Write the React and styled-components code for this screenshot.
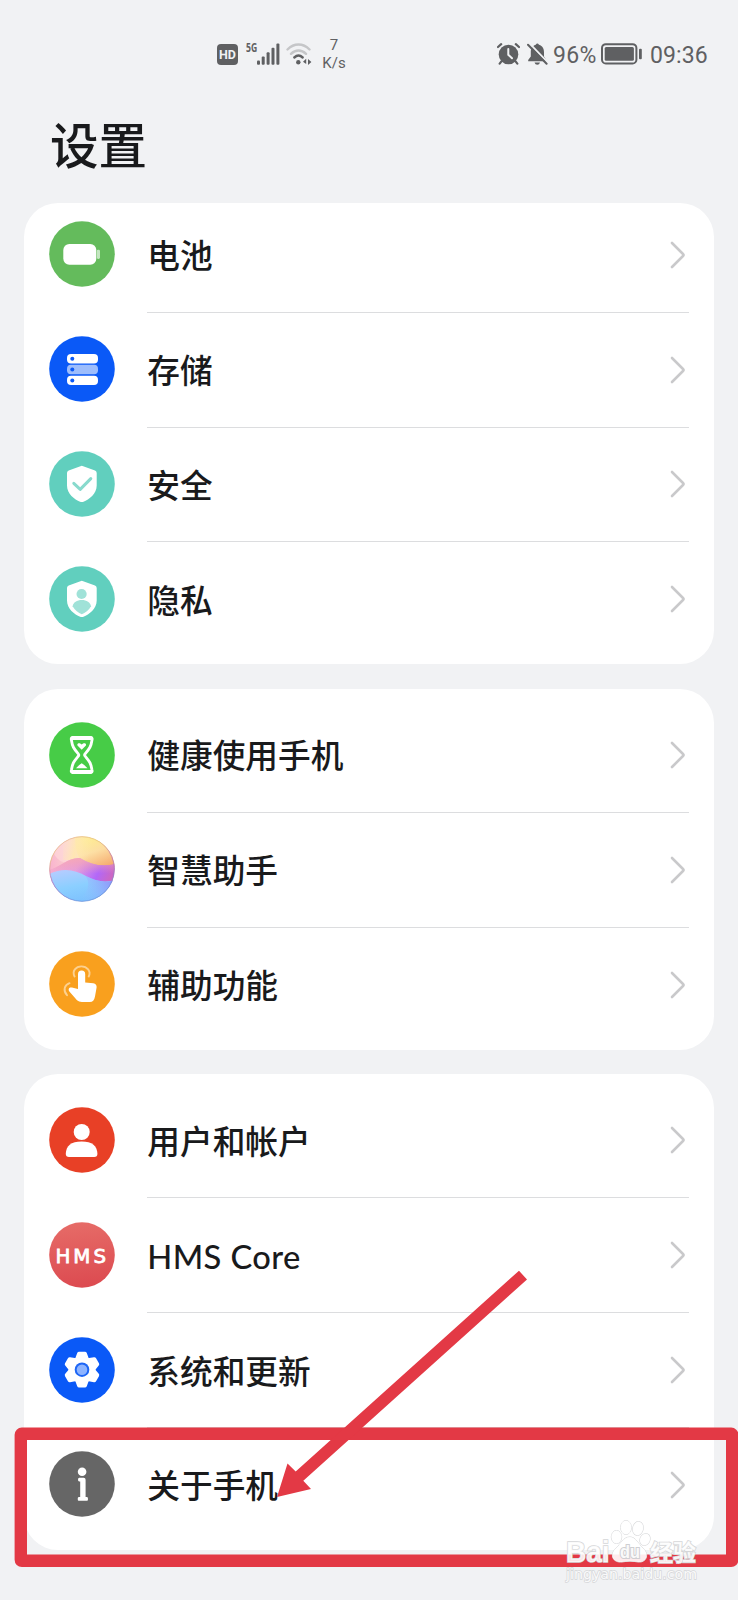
import React from 'react';
import styled, { createGlobalStyle } from 'styled-components';

const GlobalStyle = createGlobalStyle`
  body { margin: 0; background: #f1f2f4; }
  * { box-sizing: border-box; }
`;

const Screen = styled.div`
  position: relative;
  width: 738px;
  height: 1600px;
  overflow: hidden;
  background: #f1f2f4;
  color: #191a1c;
  font-family: Lato, 'Noto Sans CJK SC', sans-serif;
`;

const StatusBar = styled.header`
  display: flex;
  justify-content: space-between;
  height: 108px;
  padding: 38px 30px 0 217px;
  color: #5f6062;
  font-family: Roboto, sans-serif;
`;

const StatusGroup = styled.div`
  display: flex;
  align-items: center;
  height: 32px;
`;

const HdBadge = styled.span`
  width: 21px;
  height: 21px;
  border-radius: 4px;
  background: #5f6062;
  color: #f1f2f4;
  font: 700 12.5px/21px Roboto, sans-serif;
  text-align: center;
`;

const NetworkType = styled.span`
  align-self: flex-start;
  width: 11px;
  margin: 3.5px 0 0 7.5px;
  font: 700 12.5px/12px 'Open Sans', sans-serif;
  transform: scaleX(0.69);
  transform-origin: left;
`;

const StatusIcon = styled.svg`
  display: block;
  flex: none;
  margin-left: ${({ $gap = 0 }) => $gap}px;
`;

const Speed = styled.div`
  width: 24px;
  margin-left: 10px;
  font-size: 15px;
  line-height: 18px;
  text-align: center;
  white-space: nowrap;
`;

const StatusText = styled.span`
  width: ${({ $width }) => $width}px;
  margin-left: ${({ $gap }) => $gap}px;
  padding-top: 3px;
  font-size: 23px;
  line-height: 32px;
  letter-spacing: ${({ $tracking = 0 }) => $tracking}px;
  white-space: nowrap;
`;

const Title = styled.h1`
  height: 95px;
  margin: 0;
  padding-left: 50px;
  font-size: 48.5px;
  line-height: 75px;
  font-weight: 500;
`;

const Cards = styled.main`
  display: flex;
  flex-direction: column;
  gap: 24.6px;
  padding: 0 24.4px;
`;

const Card = styled.section`
  overflow: hidden;
  padding: ${({ $scrolled }) => ($scrolled ? '0 0 7px' : '9.2px 0 7.2px')};
  border-radius: 34px;
  background: #fff;

  & > :first-child { margin-top: ${({ $scrolled }) => ($scrolled ? '-5.1px' : '0')}; }
`;

const Row = styled.div`
  display: flex;
  align-items: center;
  height: 114.83px;
  padding-left: 24.4px;
`;

const RowIcon = styled.svg`
  display: block;
  flex: none;
  width: 66px;
  height: 66px;
  margin-bottom: 1.8px;
`;

const RowBody = styled.div`
  display: flex;
  align-items: center;
  justify-content: space-between;
  flex: 1;
  height: 100%;
  margin: 0 24.5px 0 32.5px;
  padding-right: 3px;
  border-bottom: 1px solid ${({ $last }) => ($last ? 'transparent' : '#dcdddf')};
`;

const Label = styled.span`
  padding-top: 3px;
  font-size: 32.7px;
  line-height: 44px;
  font-weight: 500;
  letter-spacing: ${({ $latin }) => ($latin ? '0.4px' : '0')};
`;

const Annotation = styled.svg`
  position: absolute;
  inset: 0;
  pointer-events: none;
`;

const Watermark = styled.svg`
  position: absolute;
  left: 558px;
  top: 1512px;
`;

const Chevron = () => (
  <svg width="16" height="28" viewBox="0 0 16 28" fill="none">
    <path d="M2 2 13 13 Q14 14 13 15 L2 26" stroke="#c9c9cb" strokeWidth="2.6" strokeLinecap="round" strokeLinejoin="round" />
  </svg>
);

const Disc = ({ color }) => <circle cx="33" cy="33" r="32.8" fill={color} />;
const SHIELD = 'M32.8 14.7 46 19.4Q47.7 20 47.7 22V34.5C47.7 43 40 48.5 34.5 50.7Q32.8 51.4 31.1 50.7C25.6 48.5 18 43 18 34.5V22Q18 20 19.7 19.4Z';

const icons = {
  battery: (
    <>
      <Disc color="#64bb5c" />
      <rect x="14.3" y="23" width="33" height="20.7" rx="6" fill="#fff" />
      <rect x="47.8" y="28.7" width="3.2" height="9.3" rx="1.4" fill="#c3e5c0" />
    </>
  ),
  storage: (
    <>
      <Disc color="#0a59f7" />
      {[18, 28.8, 39.7].map((y, i) => (
        <React.Fragment key={y}>
          <rect x="18" y={y} width="31" height="9.4" rx="4" fill={i === 1 ? '#9dbdfc' : '#fff'} />
          <circle cx="23.3" cy={y + 4.7} r="2" fill="#0a59f7" />
        </React.Fragment>
      ))}
    </>
  ),
  security: (
    <>
      <Disc color="#61cfbe" />
      <path d={SHIELD} fill="#fff" />
      <path d="M24.8 32.4 31.2 38.4 41.8 27.6" fill="none" stroke="#88dacd" strokeWidth="3" strokeLinecap="round" strokeLinejoin="round" />
    </>
  ),
  privacy: (
    <>
      <Disc color="#61cfbe" />
      <path d={SHIELD} fill="#fff" />
      <circle cx="32.6" cy="28" r="5.1" fill="#a0e2d8" />
      <path d="M23.6 40.2C24.2 36.5 28 34 32.8 34S41.4 36.5 42 40.2C40 44 36 47 32.8 48.2 29.5 47 25.8 44 23.6 40.2Z" fill="#a0e2d8" />
    </>
  ),
  hourglass: (
    <>
      <Disc color="#47cc47" />
      <path d="M23.5 15.5H41.9Q43.6 15.7 43 18C42 25 40.5 26.5 36 32Q35.2 33 36 34C40.5 39.5 42 41 43 48Q43.6 50.3 41.9 50.5H23.5Q21.8 50.3 22.4 48C23.4 41 24.9 39.5 29.4 34Q30.2 33 29.4 32C24.9 26.5 23.4 25 22.4 18Q21.8 15.7 23.5 15.5Z" fill="none" stroke="#fff" strokeWidth="2.8" strokeLinejoin="round" />
      <path d="M23.3 49.8H42.2M23.3 16.2H42.2" stroke="#fff" strokeWidth="3.6" strokeLinecap="round" />
      <path d="M32.7 27.8 28.7 23.8C27.3 22 29.8 19.8 32.7 22.4 35.6 19.8 38.1 22 36.7 23.8ZM27 46.2Q29.5 43 32.7 41.2 36 43 38.5 46.2Z" fill="#fff" />
    </>
  ),
  assistant: (
    <>
      <defs>
        <clipPath id="orb"><circle cx="33" cy="33" r="32.6" /></clipPath>
        <linearGradient id="sky" x1="0" y1="0.4" x2="1" y2="0.2">
          <stop stopColor="#f9b3cf" /><stop offset="0.35" stopColor="#fbd5ce" /><stop offset="0.6" stopColor="#fce5ae" /><stop offset="1" stopColor="#f5b47e" />
        </linearGradient>
        <linearGradient id="hill" x1="0" y1="0.4" x2="1" y2="0.6">
          <stop stopColor="#f6b0d2" /><stop offset="0.4" stopColor="#e5a0e0" /><stop offset="0.75" stopColor="#b268f8" /><stop offset="1" stopColor="#cf67bd" />
        </linearGradient>
        <linearGradient id="blush" x1="0" y1="0" x2="0" y2="1">
          <stop stopColor="#f9a9ae" stopOpacity="0.8" /><stop offset="0.6" stopColor="#f599ab" stopOpacity="0" />
        </linearGradient>
        <linearGradient id="sea" x1="0.2" y1="0" x2="0.6" y2="1">
          <stop stopColor="#b5ccff" /><stop offset="0.5" stopColor="#8bcfff" /><stop offset="1" stopColor="#7cc0fd" />
        </linearGradient>
        <linearGradient id="wave" x1="0" y1="0.6" x2="1" y2="0.2">
          <stop stopColor="#9cc5ff" stopOpacity="0" /><stop offset="1" stopColor="#937bf8" />
        </linearGradient>
        <linearGradient id="sun" x1="0.4" y1="0" x2="0.8" y2="1">
          <stop stopColor="#fff08d" /><stop offset="0.45" stopColor="#fde0a4" /><stop offset="1" stopColor="#f4a264" />
        </linearGradient>
        <linearGradient id="haze" x1="0" y1="0" x2="1" y2="0.2">
          <stop stopColor="#ffe3c4" stopOpacity="0" /><stop offset="0.5" stopColor="#ffe8b0" stopOpacity="0.9" /><stop offset="1" stopColor="#ffe8b0" stopOpacity="0" />
        </linearGradient>
        <linearGradient id="rim" x1="0" y1="0" x2="0.4" y2="1">
          <stop stopColor="#e6a7a8" /><stop offset="0.3" stopColor="#e4c374" /><stop offset="0.6" stopColor="#bb6cba" /><stop offset="1" stopColor="#6690df" />
        </linearGradient>
      </defs>
      <g clipPath="url(#orb)">
        <rect width="66" height="66" fill="url(#sky)" />
        <circle cx="19" cy="12" r="15" fill="#ffdcdc" opacity="0.6" />
        <path d="M26 0H66V31C50 34 32 29 28 17Q26 8 26 0Z" fill="url(#sun)" opacity="0.85" />
        <rect x="14" y="0" width="30" height="24" fill="url(#haze)" />
        <path d="M0 34C11 31 20 21 31 22 42 29 54 31 66 28V48H0Z" fill="url(#hill)" />
        <path d="M0 34C11 31 20 21 31 22 42 29 54 31 66 28V48H0Z" fill="url(#blush)" />
        <path d="M0 38C15 31 26 34 37 40 47 45 55 47 66 44V66H0Z" fill="url(#sea)" />
        <path d="M28 66C40 57 42 46 36 39.5 49 46 56 47 66 44V66Z" fill="url(#wave)" opacity="0.8" />
      </g>
      <circle cx="33" cy="33" r="32.3" fill="none" stroke="url(#rim)" strokeWidth="0.9" opacity="0.8" />
    </>
  ),
  accessibility: (
    <>
      <Disc color="#f9a01e" />
      <path d="M29 38V23.2Q29 19.6 32.6 19.6T36.2 23.2V31.4L44.3 32.2Q48 32.8 47.6 36.6L46 45.5Q45 51 40.8 51H32.8Q30 51 28 49.2L20.6 40.8C18.5 38 20.4 35.7 23 36.6Z" fill="#fff" />
      <path d="M25.6 25.5C22.7 20 27 15.4 32.4 15.4S42.5 20 39.7 25.5M20.5 32.2C15.3 34 13.8 39.5 18 44.2" fill="none" stroke="#fcd08f" strokeWidth="1.9" strokeLinecap="round" />
    </>
  ),
  user: (
    <>
      <Disc color="#e84026" />
      <circle cx="32.7" cy="25" r="8" fill="#fff" />
      <path d="M16.8 46.8C16.8 39 22 34.4 32.6 34.4S48.4 39 48.4 46.8Q48.4 50 45.2 50H20Q16.8 50 16.8 46.8Z" fill="#fff" />
    </>
  ),
  hms: (
    <>
      <defs>
        <linearGradient id="hms" x1="0.5" y1="0" x2="0.6" y2="1">
          <stop stopColor="#e66b67" /><stop offset="1" stopColor="#dc4a50" />
        </linearGradient>
      </defs>
      <Disc color="url(#hms)" />
      <text x="6.5" y="40.5" textLength="50.5" fontFamily="'DejaVu Sans', sans-serif" fontSize="19.8" fill="#fff" stroke="#fff" strokeWidth="0.8">HMS</text>
    </>
  ),
  update: (
    <>
      <Disc color="#0a59f7" />
      <g fill="#fff" stroke="#fff" strokeWidth="4" strokeLinejoin="round">
        <circle cx="33" cy="32.7" r="11.3" />
        {[0, 60, 120, 180, 240, 300].map((a) => (
          <path key={a} d="M27.8 23 30.1 16.8H35.9L38.2 23Z" transform={`rotate(${a} 33 32.7)`} />
        ))}
      </g>
      <circle cx="33" cy="32.7" r="7.3" fill="#1e66f5" />
      <circle cx="33" cy="32.7" r="5.3" fill="#8eb4ff" />
    </>
  ),
  about: (
    <>
      <Disc color="#666" />
      <circle cx="33.1" cy="20.8" r="4.3" fill="#fff" />
      <path d="M30.2 26.8H34.6Q36.6 26.8 36.6 28.8V46H38Q39 46 39 47.9T38 49.8H29.8Q28.7 49.8 28.7 47.9T29.8 46H31.2V30.5H30.2Q29 30.5 29 28.7T30.2 26.8Z" fill="#fff" />
    </>
  ),
};

const groups = [
  [['battery', '电池'], ['storage', '存储'], ['security', '安全'], ['privacy', '隐私']],
  [['hourglass', '健康使用手机'], ['assistant', '智慧助手'], ['accessibility', '辅助功能']],
  [['user', '用户和帐户'], ['hms', 'HMS Core'], ['update', '系统和更新'], ['about', '关于手机']],
];

const Status = () => (
  <StatusBar>
    <StatusGroup>
      <HdBadge>HD</HdBadge>
      <NetworkType>5G</NetworkType>
      <StatusIcon width="23" height="22" viewBox="0 0 23 22" $gap={0.5} fill="#5f6062">
        <rect x="0" y="17.5" width="3" height="4.2" rx="1" />
        <rect x="4.7" y="13.5" width="3" height="8.2" rx="1" />
        <rect x="9.6" y="9.2" width="3" height="12.5" rx="1" />
        <rect x="14.5" y="4.8" width="3" height="16.9" rx="1" />
        <rect x="19.4" y="0.5" width="3" height="21.2" rx="1" />
      </StatusIcon>
      <StatusIcon width="26" height="22" viewBox="0 0 26 22" $gap={6} fill="none" strokeWidth="2.4" strokeLinecap="round">
        <path d="M1.5 6.5C8-.2 17-.2 23.5 6.5M5 10.8C9.5 6.3 15.5 6.3 20 10.8" stroke="#c5c6c8" />
        <path d="M8.3 14.5C11 12 14 12 16.7 14.5" stroke="#5f6062" />
        <circle cx="12.3" cy="19.3" r="2.2" fill="#5f6062" />
        <path d="M17 18.8 20.2 15.8V21ZM22 16 25.4 19 22 22Z" fill="#5f6062" />
      </StatusIcon>
      <Speed>7<br />K/s</Speed>
    </StatusGroup>
    <StatusGroup>
      <StatusIcon width="23" height="22" viewBox="0 0 23 22" fill="none" strokeLinecap="round">
        <circle cx="11.5" cy="11.5" r="9.8" fill="#5f6062" />
        <path d="M1 4 4.2 1.2M18.8 1.2 22 4M4.4 18.4 2.7 20.6M18.6 18.4 20.3 20.6" stroke="#5f6062" strokeWidth="2.2" />
        <path d="M11.3 6V11.7L15 15.2" stroke="#f1f2f4" strokeWidth="2" />
      </StatusIcon>
      <StatusIcon width="21" height="22" viewBox="0 0 21 22" $gap={7}>
        <path d="M8.7 1.8Q10.3-.6 12 1.8C15.8 3 17 6 17 9.3V13.5L19.2 17V18.2H1.2V17L3.8 13.5V9.3C3.8 6 5 3 8.7 1.8ZM7.5 19.5H13Q12.4 21.8 10.3 21.8T7.5 19.5Z" fill="#5f6062" />
        <path d="M2.4.4 21 19.6" stroke="#f1f2f4" strokeWidth="2" />
        <path d="M1 1.8 19.6 20.8" stroke="#5f6062" strokeWidth="2" strokeLinecap="round" />
      </StatusIcon>
      <StatusText $width={45} $gap={5} $tracking={0.3}>96%</StatusText>
      <StatusIcon width="41" height="22" viewBox="0 0 41 22" $gap={3} fill="none">
        <rect x="1" y="1.2" width="34.4" height="19.3" rx="3.8" stroke="#5f6062" strokeWidth="2" />
        <rect x="3.7" y="3.9" width="29.2" height="13.9" rx="1.5" fill="#5f6062" />
        <rect x="38" y="5.7" width="2.8" height="10.5" rx="1" fill="#5f6062" />
      </StatusIcon>
      <StatusText $width={58} $gap={8} $tracking={0.1}>09:36</StatusText>
    </StatusGroup>
  </StatusBar>
);

export default function App() {
  return (
    <Screen>
      <GlobalStyle />
      <Status />
      <Title>设置</Title>
      <Cards>
        {groups.map((rows, g) => (
          <Card key={g} $scrolled={g === 0}>
            {rows.map(([icon, label], i) => (
              <Row key={icon}>
                <RowIcon viewBox="0 0 66 66">{icons[icon]}</RowIcon>
                <RowBody $last={i === rows.length - 1}>
                  <Label $latin={icon === 'hms'}>{label}</Label>
                  <Chevron />
                </RowBody>
              </Row>
            ))}
          </Card>
        ))}
      </Cards>
      <Annotation width="738" height="1600" viewBox="0 0 738 1600">
        <rect x="20.8" y="1433.8" width="711.4" height="127" rx="1" fill="none" stroke="#e33945" strokeWidth="12.4" strokeLinejoin="round" />
        <path d="M277 1497 287.5 1463.5 295.7 1471.5 519 1270.7 527 1279.5 303.3 1480.7 311 1489Z" fill="#e33945" />
      </Annotation>
      <Watermark width="150" height="80" viewBox="0 0 150 80" fill="#fff" fillOpacity="0.9" stroke="#d5d6d8" strokeWidth="1" paintOrder="stroke">
        <g>
          <ellipse cx="58.5" cy="25" rx="5.2" ry="6.5" />
          <ellipse cx="68" cy="15.5" rx="5.3" ry="7" />
          <ellipse cx="80" cy="16.5" rx="5.2" ry="7" transform="rotate(12 80 16.5)" />
          <ellipse cx="87" cy="27.5" rx="5" ry="6" transform="rotate(25 87 27.5)" />
          <path d="M72 25C78 25 80 32 85 36 92 43 88 51 80 50 75 49 69 49 64 50 55 51 51 43 58 36 63 32 65 25 72 25Z" />
        </g>
        <g strokeWidth="1.6">
          <text x="8" y="49.7" textLength="43.5" lengthAdjust="spacingAndGlyphs" fontFamily="'Liberation Sans', sans-serif" fontSize="30" fontWeight="700">Bai</text>
          <text x="62" y="46" textLength="20" lengthAdjust="spacingAndGlyphs" fontFamily="'Liberation Sans', sans-serif" fontSize="18" fontWeight="700" stroke="#cfcfd2" strokeWidth="2.2">du</text>
          <text x="92" y="48.5" textLength="46" fontFamily="'Noto Sans CJK SC', sans-serif" fontSize="23" fontWeight="700">经验</text>
          <text x="8" y="67" textLength="131" lengthAdjust="spacingAndGlyphs" fontFamily="'DejaVu Sans', sans-serif" fontSize="14.5" strokeWidth="1.4">jingyan.baidu.com</text>
        </g>
      </Watermark>
    </Screen>
  );
}
